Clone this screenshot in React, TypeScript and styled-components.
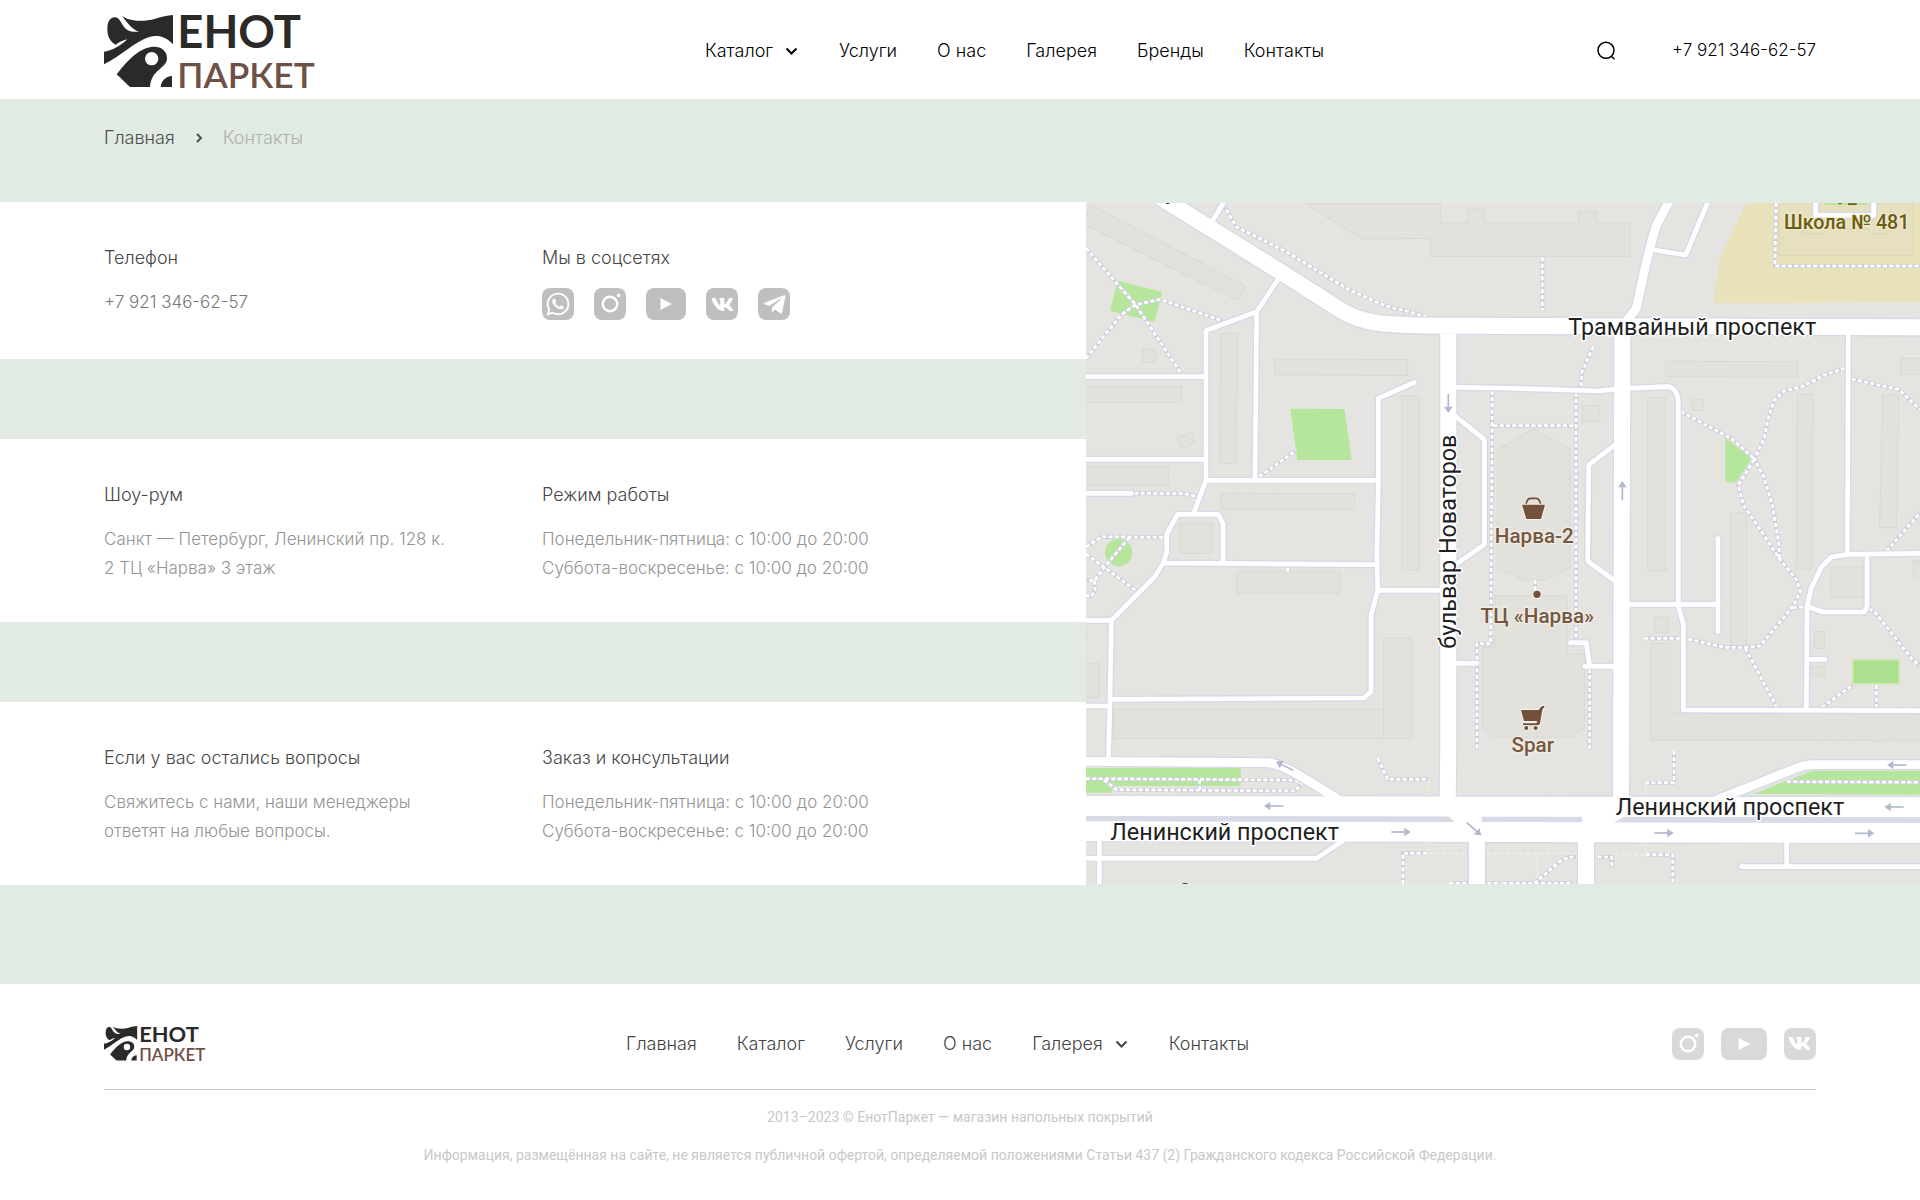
import React from "react";
import styled, { createGlobalStyle } from "styled-components";
import { FaTelegramPlane, FaVk, FaWhatsapp } from "react-icons/fa";

const GlobalStyle = createGlobalStyle`
  *, *::before, *::after { box-sizing: border-box; }
  body {
    margin: 0;
    background: #fff;
    color: #000;
    font-family: Inter, "Open Sans", sans-serif;
    font-size: 18px;
    font-weight: 300;
    line-height: 29px;
  }
  a { color: inherit; text-decoration: none; }
  h2, p { margin: 0; }
  svg { display: block; }
`;

const Page = styled.div`
  background: #e2eae4;
`;

const Header = styled.header`
  display: grid;
  grid-template-columns: 35.1% auto 1fr;
  align-items: center;
  height: 99px;
  padding: 2px 104px 0;
  background: #fff;
`;

const HomeLink = styled.a`
  display: block;
  justify-self: start;
`;

const LogoSvg = styled.svg`
  overflow: visible;
`;

const Nav = styled.nav<{ $tone: string }>`
  display: flex;
  align-items: center;
  gap: 40px;
  color: ${(p) => p.$tone};
  white-space: nowrap;
`;

const MenuButton = styled.button`
  display: flex;
  align-items: center;
  gap: 12px;
  padding: 0;
  border: 0;
  background: none;
  color: inherit;
  font: inherit;
  cursor: pointer;
`;

const HeaderTools = styled.div`
  display: flex;
  align-items: center;
  justify-content: flex-end;
  gap: 56px;
`;

const IconButton = styled.button`
  padding: 0;
  border: 0;
  background: none;
  cursor: pointer;
`;

const Phone = styled.a`
  font-size: 17px;
  white-space: nowrap;
`;

const Breadcrumbs = styled.nav`
  display: flex;
  align-items: center;
  gap: 18px;
  height: 103px;
  padding: 0 104px 26px;
  color: #4b4e4c;
`;

const Current = styled.span`
  color: #abb1ad;
`;

const Contacts = styled.main`
  display: grid;
  grid-template-columns: 1086fr 834fr;
`;

const Cards = styled.div`
  display: flex;
  flex-direction: column;
  gap: 80px;
`;

const Card = styled.section`
  display: grid;
  grid-template-columns: 438px 1fr;
  padding: 41px 104px 39px;
  background: #fff;
`;

const Block = styled.div`
  display: flex;
  flex-direction: column;
  gap: 16px;
`;

const Title = styled.h2`
  color: #464646;
  font-size: 18px;
  font-weight: 300;
`;

const Text = styled.p<{ $tone?: string }>`
  color: ${(p) => p.$tone ?? "#949494"};
  font-size: 17px;
`;

const Socials = styled.div<{ $gap: number }>`
  display: flex;
  align-items: center;
  justify-content: flex-end;
  gap: ${(p) => p.$gap}px;
`;

const ContactSocials = styled(Socials)`
  justify-content: flex-start;
`;

const SocialLink = styled.a<{ $width: number; $tone: string }>`
  display: flex;
  align-items: center;
  justify-content: center;
  width: ${(p) => p.$width}px;
  height: 32px;
  border-radius: 8px;
  background: ${(p) => p.$tone};
  color: #fff;
`;

const MapFrame = styled.div`
  min-height: 683px;
  padding: 1px 0;
  overflow: hidden;
`;

const MapSvg = styled.svg`
  width: 100%;
  height: 681px;
  font-family: Roboto, "Open Sans", sans-serif;
  font-weight: 400;
  stroke-linejoin: round;
`;

const Footer = styled.footer`
  margin-top: 99px;
  padding: 28px 104px 32px;
  background: #fff;
`;

const FooterTop = styled.div`
  display: grid;
  grid-template-columns: 523fr 621fr 568fr;
  align-items: center;
  height: 78px;
  padding-bottom: 14px;
  border-bottom: 1px solid #c4c4c4;
`;

const Notes = styled.div`
  display: flex;
  flex-direction: column;
  gap: 14px;
  padding-top: 15px;
  color: #c8c8c8;
  font-family: Roboto, sans-serif;
  font-size: 14px;
  font-weight: 400;
  line-height: 24px;
  text-align: center;
`;

function Logo({ width }: { width: number }) {
  return (
    <LogoSvg width={width} viewBox="42 36 630 228" role="img" aria-label="Енот Паркет">
      <g fill="#2b2a29">
        <path d="M77 131C60 122 52 106 52 84C52 60 62 48 76 49C92 51 93 72 107 83C117 91 130 94 147 92C126 85 114 68 96 45C118 61 160 63 196 53C216 47 232 43 249 42V130C226 105 202 101 178 108C136 121 92 165 42 190V152C68 149 96 131 112 115C98 119 86 124 77 131Z" />
        <path
          fillRule="evenodd"
          d="M80 220C104 190 138 146 182 138C212 134 231 149 231 172C231 203 184 204 180 258H120ZM185 153A20 20 0 1 0 185 193A20 20 0 1 0 185 153Z"
        />
        <path d="M212 258C213 241 226 226 246 225V258Z" />
        <text x="262" y="141" fontFamily="Lato, sans-serif" fontWeight="700" fontSize="136">ЕНОТ</text>
      </g>
      <text x="262" y="261" fill="#6f5046" fontFamily="Lato, sans-serif" fontWeight="600" fontSize="106">ПАРКЕТ</text>
    </LogoSvg>
  );
}

function ChevronDown() {
  return (
    <svg width="14" height="14" viewBox="0 0 14 14" fill="none" stroke="currentColor" strokeWidth="2" aria-hidden="true">
      <path d="M1.5 4.5L6.5 9.5L11.5 4.5" />
    </svg>
  );
}

function ChevronRight() {
  return (
    <svg width="12" height="12" viewBox="0 0 12 12" fill="none" stroke="currentColor" strokeWidth="2" aria-hidden="true">
      <path d="M4 2L8 6L4 10" />
    </svg>
  );
}

function SearchIcon() {
  return (
    <svg width="20" height="20" viewBox="0 0 20 20" fill="none" stroke="#000" strokeWidth="1.5" aria-hidden="true">
      <circle cx="10" cy="9.3" r="8" />
      <path d="M15 15L18.5 18.2" />
    </svg>
  );
}

function InstagramMark() {
  return (
    <svg width="32" height="32" viewBox="0 0 32 32" aria-hidden="true">
      <circle cx="16" cy="16" r="7.2" fill="none" stroke="#fff" strokeWidth="2.4" />
      <circle cx="24.6" cy="7.4" r="1.8" fill="#fff" />
    </svg>
  );
}

function PlayMark() {
  return (
    <svg width="12" height="12" viewBox="0 0 12 12" fill="#fff" aria-hidden="true">
      <path d="M0.5 0L12 6L0.5 12Z" />
    </svg>
  );
}

const marks = {
  whatsapp: { label: "WhatsApp", icon: <FaWhatsapp size={26} /> },
  instagram: { label: "Instagram", icon: <InstagramMark /> },
  youtube: { label: "YouTube", icon: <PlayMark /> },
  vk: { label: "ВКонтакте", icon: <FaVk size={23} /> },
  telegram: { label: "Telegram", icon: <FaTelegramPlane size={25} /> },
};

function Social({ name, width = 32, tone }: { name: keyof typeof marks; width?: number; tone: string }) {
  return (
    <SocialLink href="#" aria-label={marks[name].label} $width={width} $tone={tone}>
      {marks[name].icon}
    </SocialLink>
  );
}

/* Map geometry: one unit is a third of a pixel at the design width. */
const buildings = [
  "M15 15L478 258L457 302L-10 70Z",
  "M405 400H455L449 790H400Z",
  "M566 477L965 479V527L566 524Z",
  "M170 448H209V487H170Z",
  "M-5 559L287 560V607H-5Z",
  "M-5 801H247V855H-5Z",
  "M275 712L318 698L328 730L285 745Z",
  "M405 880L806 881V928L405 926Z",
  "M948 587H999V1110H948Z",
  "M281 970H379V1060H281Z",
  "M452 1114H761V1180H452Z",
  "M655 9L828 117L1033 115V169H1632V68H1532V34H1478V68H1196V28H1147V68H1064V9Z",
  "M83 1528H892V1615H83Z",
  "M892 1314H979V1615H892Z",
  "M-5 1390H40V1492H-5Z",
  "M-5 1288H1V1318H-5Z",
  "M1235 750L1341 686L1452 747V1105L1375 1140H1318L1235 1105Z",
  "M1226 1188H1443V1362H1496V1582L1456 1612H1218L1190 1582V1342H1226Z",
  "M1489 617H1541V664H1489Z",
  "M1739 484L2135 485V532L1739 530Z",
  "M1818 599H1852V631H1818Z",
  "M1685 593H1739V1113H1685Z",
  "M2134 583H2181L2177 1108H2131Z",
  "M2390 585H2438L2432 983H2381Z",
  "M2444 475H2510V523H2444Z",
  "M1934 938H1981V1336H1934Z",
  "M2233 1101H2330V1192H2233Z",
  "M2482 1082H2510V1134H2482Z",
  "M1705 1252H1747V1298H1705Z",
  "M2185 1295H2215V1345H2185Z",
  "M2176 1400H2215V1427H2176Z",
  "M1695 1330H1753V1540H2510V1622L1695 1621Z",
];

const lanes = [
  "M412 9L380 62",
  "M578 235L512 335L360 392V840L322 943",
  "M512 335L507 840",
  "M-10 530H355",
  "M-10 778H355",
  "M-10 880H137",
  "M360 841H877",
  "M985 547L877 595V842L873 1060L875 1171L855 1246V1476L833 1494L75 1498",
  "M322 943H275L242 1002V1056L232 1090L203 1134L76 1261H-10",
  "M322 943H397L411 970V1090",
  "M232 1089L870 1094",
  "M76 1261L72 1500L67 1680",
  "M-10 1518H70",
  "M877 1171H1065",
  "M1108 1390H1173",
  "M1110 562L1251 564L1535 573L1610 566L1741 560C1765 560 1777 580 1777 612V1220L1792 1272V1530L2510 1532",
  "M1100 642L1195 718V1034L1108 1094",
  "M1706 150L1799 165L1868 0",
  "M2287 395L2284 1060",
  "M1600 725L1508 795L1505 1083L1600 1152",
  "M1896 1015V1295",
  "M1620 1213H1896",
  "M2510 1060L2286 1063L2236 1071L2206 1101L2176 1165L2163 1220L2161 1530",
  "M2163 1219L2211 1236H2335L2343 1220V1066",
  "M2166 1378H2217",
  "M1453 1328H1501L1511 1399",
  "M1496 1399H1600",
  "M2189 0V46H2363V0",
  "M-10 1975H692L785 1913",
  "M40 1910V2060",
  "M1966 2000H2510",
  "M2102 1915V1998",
];

const streets = [
  "M-10 1684L545 1688C600 1694 660 1740 760 1800",
  "M1752 0L1714 70C1685 150 1670 240 1651 325L1618 368",
  "M1870 1808L2130 1705C2150 1697 2160 1694 2191 1694H2510",
];

const avenues = [
  "M220 -10L575 210L772 335C830 368 880 376 1062 377L2510 382",
  "M1087 380V1620L1085 1800",
  "M1609 390L1605 1800",
  "M1173 1910V2060",
  "M1500 1910V2060",
];

const highways = ["M-10 1818L2510 1822", "M-10 1893L2510 1899"];

const paths = [
  "M0 145L147 312L285 520",
  "M0 475L105 345L147 315L222 298L408 362",
  "M412 12L450 80L600 155L790 270L900 318L1025 350",
  "M520 830L630 752",
  "M145 880L295 881L335 890",
  "M0 1040L48 1010L236 1012M130 1012L55 1102L25 1142L0 1140M0 1062L150 1172M25 1142L28 1170L15 1190L0 1185",
  "M1219 572L1214 1331H1173V1648",
  "M1222 677H1470M1470 578V1320M1522 440L1488 515L1486 555L1472 570",
  "M1369 172V330",
  "M2070 9L2067 198H2510",
  "M1785 635L1940 718L2005 777L1957 855L1972 915L2080 1075L2132 1140L2143 1175L2120 1220L2022 1338L1980 1342H1915L1805 1317",
  "M2120 1223L2155 1220M2080 1075V1040L2060 920L2033 830L2005 777L2035 715L2045 660L2065 600L2095 573L2150 560L2215 525L2280 503",
  "M1675 1315H1785M1978 1345L2072 1522",
  "M2297 537L2437 568L2510 636",
  "M2510 930L2400 1055",
  "M2349 1226L2370 1240L2480 1380L2510 1400",
  "M2208 1522L2300 1455M2371 1455V1522",
  "M1511 1407V1650M1347 1140V1178",
  "M1764 1652V1748H1680",
  "M875 1676L905 1738H1028",
  "M0 1736L610 1740L648 1746L628 1773L92 1769L52 1738M341 1740V1770",
  "M2103 1745L2510 1747",
  "M951 2052V1960H1025M1090 2050H1240M1251 2050H1460",
  "M1345 2050L1420 1985L1450 1971H1475",
  "M1535 1971H1577V2002M1680 1964H1760V2052",
  "M605 1104V1116",
];

const arrows: [number, number, number][] = [
  [1087, 610, 90],
  [1609, 872, -90],
  [563, 1818, 180],
  [596, 1698, 207],
  [945, 1896, 0],
  [1164, 1887, 41],
  [1734, 1899, 0],
  [2336, 1900, 0],
  [2432, 1695, 180],
  [2424, 1821, 180],
];

type RoadProps = { lines: string[]; width: number; cap?: "butt" | "round" };

function Road({ lines, width, cap = "butt" }: RoadProps) {
  return <path d={lines.join("")} fill="none" stroke="#fff" strokeWidth={width} strokeLinecap={cap} />;
}

function Casing({ lines, width, cap = "butt" }: RoadProps) {
  return <path d={lines.join("")} fill="none" stroke="#d6d9e7" strokeWidth={width} strokeLinecap={cap} />;
}

function CityMap() {
  return (
    <MapSvg viewBox="0 9 2502 2043" preserveAspectRatio="xMidYMid slice" role="img" aria-label="Карта проезда">
      <rect x="-500" y="-500" width="3600" height="3200" fill="#e5e4e0" />
      <path d="M1982 9L1904 170L1881 310L2510 306V9Z" fill="#e8e1b9" />
      <path d="M2080 9V167H2481V9Z" fill="#e6dfc0" stroke="#dcd6b5" strokeWidth="3" />
      <path d="M2152 46V101H2216V88H2350V101H2414V9" fill="none" stroke="#dcd6b5" strokeWidth="3" />
      <path d={buildings.join("")} fill="#e2e1dc" stroke="#d9d8d3" strokeWidth="3" />
      <path
        d="M95 242L229 276L205 366L72 332ZM613 626L775 627L797 780H634ZM0 1704H464V1758H78V1778H0ZM1918 714L1996 775L1950 848L1918 845ZM2002 1782L2180 1712H2510V1784ZM2214 9H2342V15H2214Z"
        fill="#b6e59c"
      />
      <circle cx="98" cy="1058" r="41" fill="#b6e59c" />
      <path d="M2301 1380H2439V1451H2301Z" fill="#aae08f" stroke="#cdea9f" strokeWidth="4" />

      <path d={paths.join("")} fill="none" stroke="#cfd0dc" strokeWidth="12" />
      <path d={paths.join("")} fill="none" stroke="#fff" strokeWidth="8" strokeDasharray="12 7" />
      <path
        d="M1028 1740V1960H1145M1200 1960H1475M1585 1964H1680V1740M1354 1962V2040"
        fill="none"
        stroke="#efeee8"
        strokeWidth="5"
        strokeDasharray="12 8"
      />

      <Casing lines={lanes} width={22} cap="round" />
      <Casing lines={streets} width={34} />
      <Casing lines={avenues} width={56} />
      <Casing lines={highways} width={68} />
      <Road lines={lanes} width={14} cap="round" />
      <Road lines={streets} width={26} />
      <Road lines={avenues} width={48} />
      <Road lines={highways} width={60} />
      <path d="M0 1856L2510 1861" stroke="#d8dae5" strokeWidth="15" />
      <path d="M1085 1846H1187V1868H1108ZM1488 1846H1622L1576 1872H1488Z" fill="#fff" />

      <g fill="none" stroke="#b2b8cf" strokeWidth="5">
        {arrows.map(([x, y, angle]) => (
          <g key={`${x}-${y}`} transform={`translate(${x} ${y}) rotate(${angle})`}>
            <path d="M-29 0H14" />
            <path d="M10 -13L29 0L10 13Z" fill="#b2b8cf" stroke="none" />
          </g>
        ))}
      </g>

      <g fill="#725039" stroke="#f4f2ee" strokeWidth="6" paintOrder="stroke">
        <path d="M1319 916L1324 901Q1327 895 1334 895H1350Q1357 895 1360 901L1365 916" fill="none" stroke="#725039" strokeWidth="5" />
        <path d="M1308 914H1377L1365 957H1321Z" />
        <circle cx="1353" cy="1183" r="11" />
        <path d="M1305 1530H1358L1363 1523Q1365 1517 1375 1517V1523Q1370 1523 1369 1529L1362 1570Q1361 1576 1355 1576H1311V1570H1352L1353 1563H1314Z" />
        <circle cx="1321" cy="1584" r="6" />
        <circle cx="1349" cy="1584" r="6" />
      </g>

      <g stroke="#fff" strokeWidth="9" paintOrder="stroke" fill="#1f1f1f" fontSize="70">
        <text x="1447" y="404">Трамвайный проспект</text>
        <text x="73" y="1919">Ленинский проспект</text>
        <text x="1589" y="1845">Ленинский проспект</text>
        <text transform="translate(1110 1346) rotate(-90)">бульвар Новаторов</text>
      </g>
      <g stroke="#efede6" strokeWidth="8" paintOrder="stroke" fontWeight="500">
        <text x="2094" y="88" fontSize="59" fill="#6c5b12" stroke="#efe9cc">Школа № 481</text>
        <g fontSize="62" fill="#75583f" textAnchor="middle">
          <text x="1345" y="1028">Нарва-2</text>
          <text x="1354" y="1268">ТЦ «Нарва»</text>
          <text x="1340" y="1656">Spar</text>
        </g>
      </g>
      <path d="M2258 9H2268L2264 13H2258ZM2286 10H2312V15H2286Z" fill="#6c5b12" />
      <path d="M240 9H250V12H240ZM290 2052V2049H304V2052Z" fill="#444" />
    </MapSvg>
  );
}

export default function App() {
  return (
    <Page>
      <GlobalStyle />
      <Header>
        <HomeLink href="#"><Logo width={210} /></HomeLink>
        <Nav $tone="#000" aria-label="Основное меню">
          <MenuButton type="button">Каталог<ChevronDown /></MenuButton>
          <a href="#">Услуги</a>
          <a href="#">О нас</a>
          <a href="#">Галерея</a>
          <a href="#">Бренды</a>
          <a href="#">Контакты</a>
        </Nav>
        <HeaderTools>
          <IconButton type="button" aria-label="Поиск"><SearchIcon /></IconButton>
          <Phone href="tel:+79213466257">+7 921 346-62-57</Phone>
        </HeaderTools>
      </Header>

      <Breadcrumbs aria-label="Навигация">
        <a href="#">Главная</a>
        <ChevronRight />
        <Current aria-current="page">Контакты</Current>
      </Breadcrumbs>

      <Contacts>
        <Cards>
          <Card>
            <Block>
              <Title>Телефон</Title>
              <Text $tone="#777"><a href="tel:+79213466257">+7 921 346-62-57</a></Text>
            </Block>
            <Block>
              <Title>Мы в соцсетях</Title>
              <ContactSocials $gap={20}>
                <Social name="whatsapp" tone="#bfbfbf" />
                <Social name="instagram" tone="#bfbfbf" />
                <Social name="youtube" width={40} tone="#bfbfbf" />
                <Social name="vk" tone="#bfbfbf" />
                <Social name="telegram" tone="#bfbfbf" />
              </ContactSocials>
            </Block>
          </Card>
          <Card>
            <Block>
              <Title>Шоу-рум</Title>
              <Text>Санкт — Петербург, Ленинский пр. 128 к.<br />2 ТЦ «Нарва» 3 этаж</Text>
            </Block>
            <Block>
              <Title>Режим работы</Title>
              <Text>Понедельник-пятница: с 10:00 до 20:00<br />Суббота-воскресенье: с 10:00 до 20:00</Text>
            </Block>
          </Card>
          <Card>
            <Block>
              <Title>Если у вас остались вопросы</Title>
              <Text>Свяжитесь с нами, наши менеджеры<br />ответят на любые вопросы.</Text>
            </Block>
            <Block>
              <Title>Заказ и консультации</Title>
              <Text>Понедельник-пятница: с 10:00 до 20:00<br />Суббота-воскресенье: с 10:00 до 20:00</Text>
            </Block>
          </Card>
        </Cards>
        <MapFrame><CityMap /></MapFrame>
      </Contacts>

      <Footer>
        <FooterTop>
          <HomeLink href="#"><Logo width={101} /></HomeLink>
          <Nav $tone="#444" aria-label="Меню в подвале">
            <a href="#">Главная</a>
            <a href="#">Каталог</a>
            <a href="#">Услуги</a>
            <a href="#">О нас</a>
            <MenuButton type="button">Галерея<ChevronDown /></MenuButton>
            <a href="#">Контакты</a>
          </Nav>
          <Socials $gap={17}>
            <Social name="instagram" tone="#d9d9d9" />
            <Social name="youtube" width={46} tone="#d9d9d9" />
            <Social name="vk" tone="#d9d9d9" />
          </Socials>
        </FooterTop>
        <Notes>
          <p>2013–2023 © ЕнотПаркет — магазин напольных покрытий</p>
          <p>Информация, размещённая на сайте, не является публичной офертой, определяемой положениями Статьи 437 (2) Гражданского кодекса Российской Федерации.</p>
        </Notes>
      </Footer>
    </Page>
  );
}
